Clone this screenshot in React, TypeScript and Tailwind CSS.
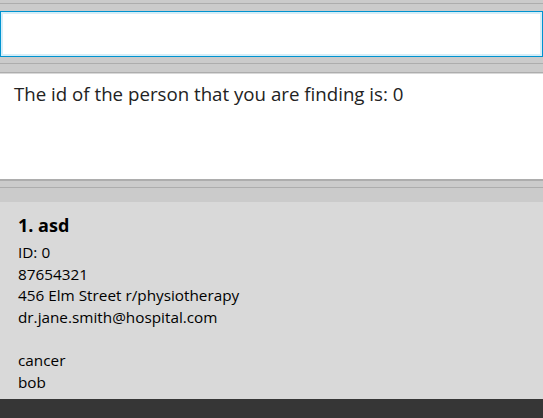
import React from 'react';

const person = {
  index: 1,
  name: 'asd',
  id: 0,
  phone: '87654321',
  address: '456 Elm Street r/physiotherapy',
  email: 'dr.jane.smith@hospital.com',
  remark: '',
  tags: ['cancer', 'bob'],
};

const Divider = () => <div className="h-px bg-[#adadad]" />;

export default function App() {
  return (
    <div className="w-[543px] h-[418px] flex flex-col bg-[#cbcbcb] overflow-hidden font-['Open_Sans',sans-serif]">
      {/* command box */}
      <div className="h-[3px]" />
      <Divider />
      <div className="h-[7px]" />
      <div className="h-[46px] border border-[#0093d0] bg-white shadow-[inset_0_0_0_2px_#d6eef8]">
        <input className="w-full h-full bg-transparent outline-none px-2" />
      </div>
      <div className="h-[6px]" />
      <Divider />
      <div className="h-[8px]" />
      <Divider />

      {/* result display */}
      <div className="h-[106px] bg-white px-[14px] pt-[6px] text-[18.7px] leading-[27px] text-[#222] border-t border-[#d8d8d8]">
        The id of the person that you are finding is: 0
      </div>
      <div className="h-[2px] bg-[#adadad]" />
      <div className="h-[6px]" />
      <Divider />
      <div className="h-[14px]" />

      {/* person list */}
      <div className="flex-1 bg-[#d9d9d9] px-[18px] pt-[11px] text-[15.3px] leading-[21.6px] text-black">
        <div className="text-[18px] font-bold leading-[24px] mb-[5px]">
          {person.index}. {person.name}
        </div>
        <div>ID: {person.id}</div>
        <div>{person.phone}</div>
        <div>{person.address}</div>
        <div>{person.email}</div>
        <div className="h-[21.6px]">{person.remark}</div>
        {person.tags.map((t) => (
          <div key={t}>{t}</div>
        ))}
      </div>

      {/* status bar */}
      <div className="h-[19px] bg-[#363636]" />
    </div>
  );
}
